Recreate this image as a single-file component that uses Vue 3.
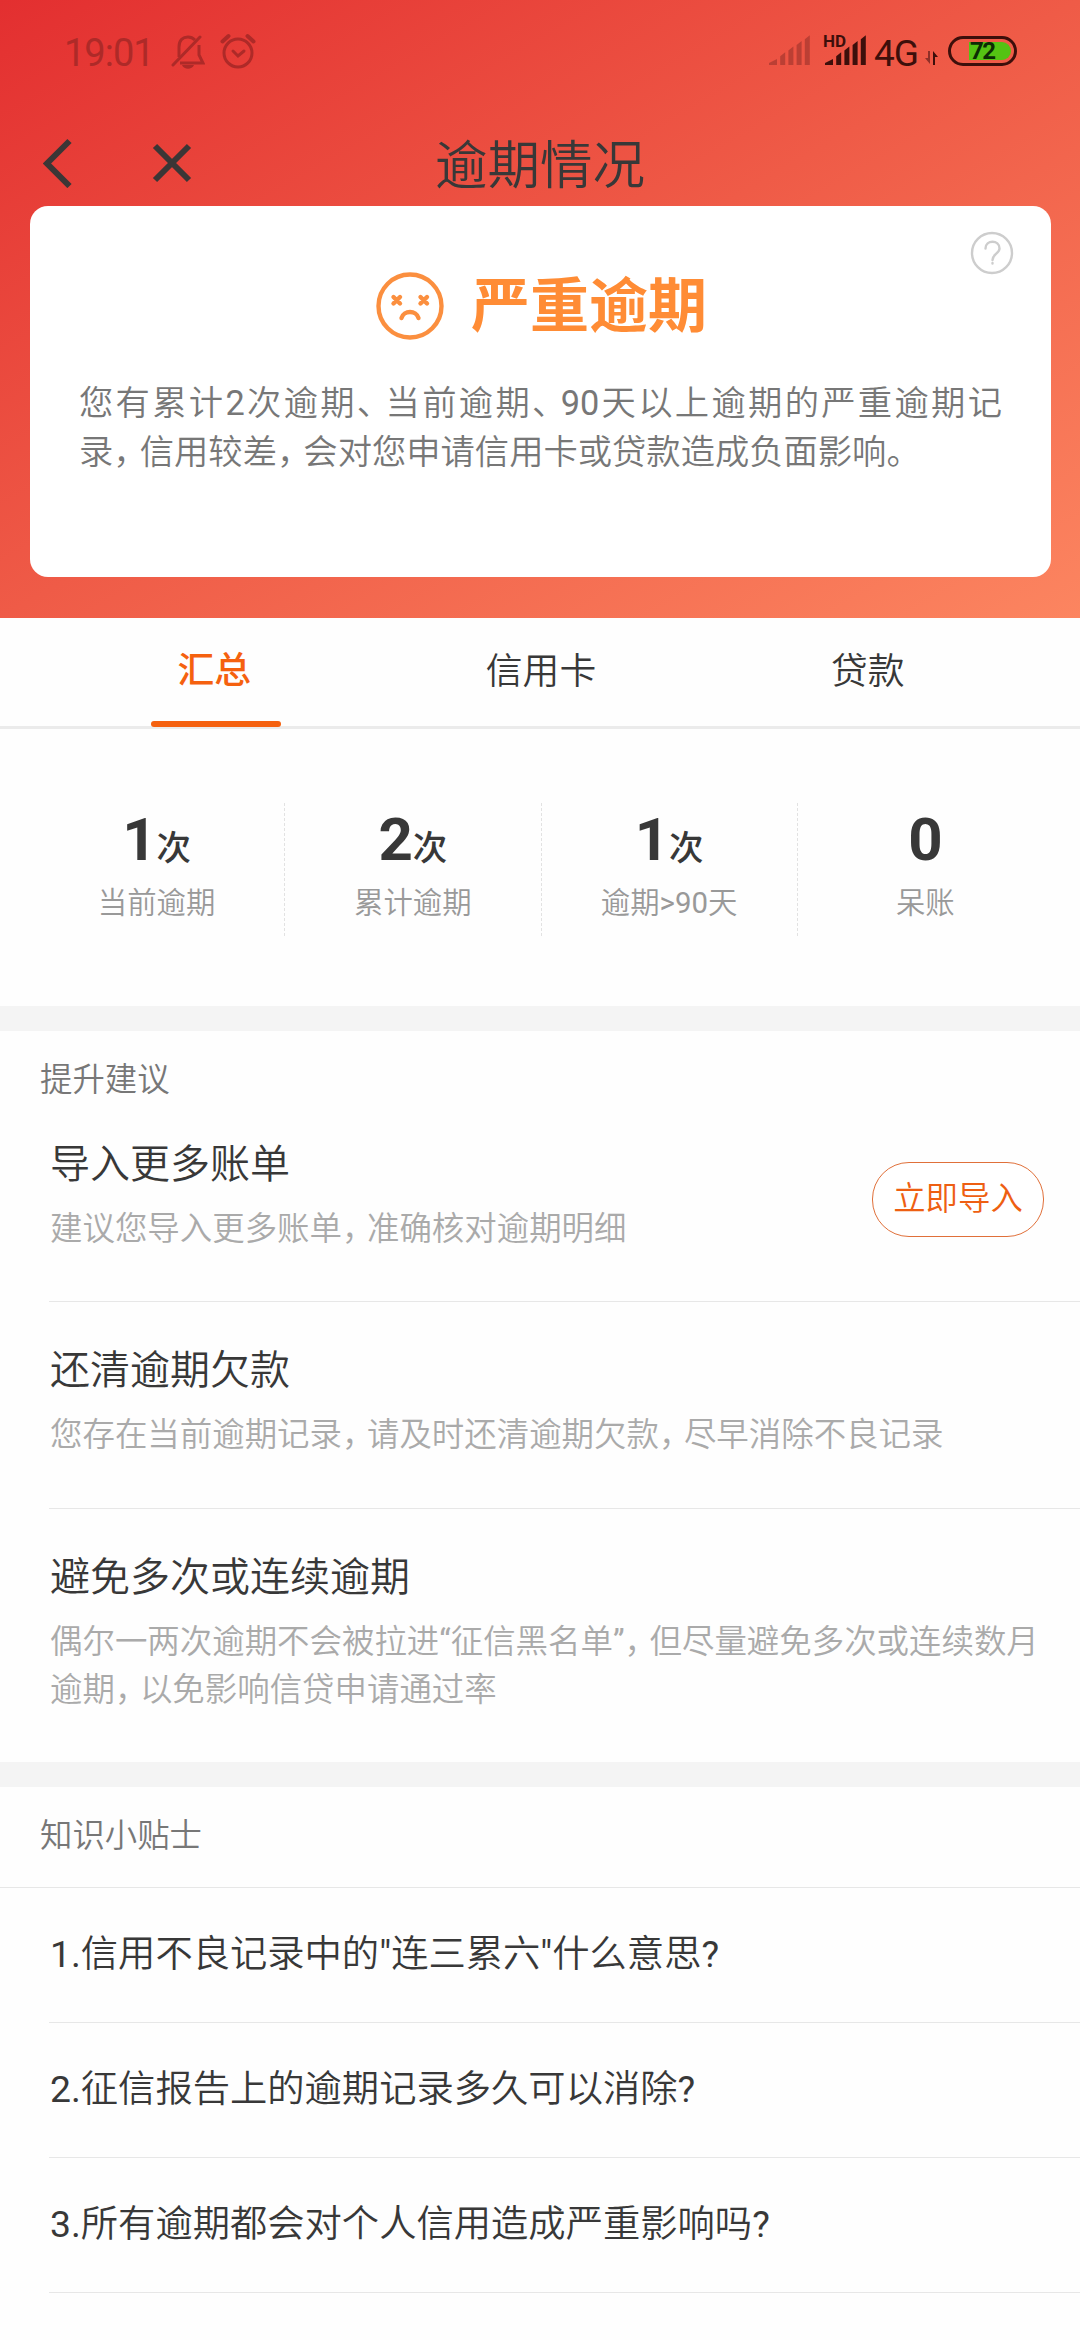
<script setup>
const tabs = ['汇总', '信用卡', '贷款']
const stats = [
  { value: '1', unit: '次', label: '当前逾期' },
  { value: '2', unit: '次', label: '累计逾期' },
  { value: '1', unit: '次', label: '逾期>90天' },
  { value: '0', unit: '', label: '呆账' },
]
const summary = ['您有累计2次逾期、当前逾期、90天以上逾期的严重逾期记', '录，信用较差，会对您申请信用卡或贷款造成负面影响。']
const advice = [
  { title: '导入更多账单', lines: ['建议您导入更多账单，准确核对逾期明细'], action: '立即导入' },
  { title: '还清逾期欠款', lines: ['您存在当前逾期记录，请及时还清逾期欠款，尽早消除不良记录'] },
  {
    title: '避免多次或连续逾期',
    lines: ['偶尔一两次逾期不会被拉进“征信黑名单”，但尽量避免多次或连续数月', '逾期，以免影响信贷申请通过率'],
  },
]
const tips = [
  '1.信用不良记录中的"连三累六"什么意思?',
  '2.征信报告上的逾期记录多久可以消除?',
  '3.所有逾期都会对个人信用造成严重影响吗?',
]
// Commas are set tighter than a full em and Latin runs one weight heavier,
// so a line is cut into pieces that can be styled apart.
const pieces = (text) => text.split(/([，、]|[0-9.?>"“”]+)/).filter(Boolean)
const kind = (s) => ({ mark: /^[，、]$/.test(s), latin: /^[0-9.?>"“”]+$/.test(s) })
const bars = [0, 1, 2, 3, 4]
</script>

<template>
  <div class="page">
    <header class="hero">
      <div class="status">
        <span class="clock">19:01</span>
        <svg class="bell" width="34" height="36" viewBox="0 0 34 36" fill="none" stroke="currentColor" stroke-width="3">
          <path d="M8 23V13C8 6 12 3 17 3c3 0 5 1 7 3M28 11v10l4 8H9" />
          <path d="M2 31L29 3" stroke-linecap="round" />
          <path d="M11 31h12c-2 5-10 5-12 0z" fill="currentColor" stroke="none" />
        </svg>
        <svg class="alarm" width="36" height="36" viewBox="0 0 36 36" fill="none" stroke="currentColor" stroke-width="3" stroke-linecap="round">
          <circle cx="18" cy="20" r="14" />
          <path d="M13 18l5 5 6-5" />
          <path d="M2.500 8.500l6-5.500M33.500 8.500l-6-5.500" stroke-width="4" />
        </svg>
        <div class="signals">
          <svg width="98" height="34" viewBox="0 0 98 34">
            <g fill="#bb3f34">
              <path v-for="i in bars" :key="i" :d="`M${(i ? 3 : 0) + i * 8.2} 32v-${i ? 3 + i * 5.7 : 2}l${i ? 5 : 8}-4v${i ? 7 + i * 5.7 : 6}z`" />
            </g>
            <g fill="#3d0f0b">
              <path v-for="i in bars" :key="i" :d="`M${(i ? 59 : 56) + i * 8.2} 32v-${i ? 3 + i * 5.7 : 2}l${i ? 5 : 8}-4v${i ? 7 + i * 5.7 : 6}z`" />
            </g>
          </svg>
          <span class="hd">HD</span>
        </div>
        <span class="net">4G</span>
        <svg class="updown" width="14" height="14" viewBox="0 0 14 14">
          <path d="M5 0v13L0 7h3V0z" fill="#8f3028" />
          <path d="M8 14V0l5 6h-3v8z" fill="#3d0f0b" />
        </svg>
        <div class="battery"><span class="charge"></span><b>72</b></div>
      </div>
      <div class="nav">
        <svg class="back" width="30" height="50" viewBox="0 0 30 50"><path d="M26.500 3L4 25.500 26.500 48" /></svg>
        <svg class="close" width="40" height="40" viewBox="0 0 40 40"><path d="M3 3l34 34M37 3L3 37" /></svg>
        <h1>逾期情况</h1>
      </div>
      <section class="card">
        <svg class="help" width="44" height="44" viewBox="0 0 44 44" fill="none" stroke="#cdcdcd" stroke-width="2.400">
          <circle cx="22" cy="22" r="20" />
          <path d="M15.500 17.500c0-9 14-9 14 0 0 5-7 5.500-7 11.500M22.500 32v.5" stroke-linecap="round" />
        </svg>
        <div class="verdict">
          <svg width="68" height="68" viewBox="0 0 68 68" fill="none" stroke="#fb8f3f" stroke-width="4.400" stroke-linecap="round">
            <circle cx="34" cy="34" r="31.500" />
            <path d="M17.500 25l6.500 6.500M24 25l-6.500 6.500M44.500 25l6.500 6.500M51 25l-6.500 6.500M25.500 46c2-8 15-8 17 0" />
          </svg>
          <strong>严重逾期</strong>
        </div>
        <p class="summary">
          <span v-for="line in summary" :key="line" class="line"><span v-for="(s, i) in pieces(line)" :key="i" :class="kind(s)">{{ s }}</span></span>
        </p>
      </section>
    </header>

    <nav class="tabs">
      <div v-for="(t, i) in tabs" :key="t" class="tab" :class="{ active: i === 0 }">{{ t }}</div>
    </nav>

    <section class="stats">
      <div v-for="s in stats" :key="s.label" class="stat">
        <div class="value">{{ s.value }}<small v-if="s.unit">{{ s.unit }}</small></div>
        <div class="label"><span v-for="(p, i) in pieces(s.label)" :key="i" :class="kind(p)">{{ p }}</span></div>
      </div>
    </section>

    <section class="block advice">
      <h2>提升建议</h2>
      <article v-for="a in advice" :key="a.title" class="item">
        <div class="body">
          <h3>{{ a.title }}</h3>
          <p>
            <span v-for="line in a.lines" :key="line" class="line"><span v-for="(s, i) in pieces(line)" :key="i" :class="kind(s)">{{ s }}</span></span>
          </p>
        </div>
        <button v-if="a.action">{{ a.action }}</button>
      </article>
    </section>

    <section class="block tips">
      <h2>知识小贴士</h2>
      <div class="list">
        <div v-for="t in tips" :key="t" class="tip"><span v-for="(s, i) in pieces(t)" :key="i" :class="kind(s)">{{ s }}</span></div>
      </div>
    </section>
  </div>
</template>

<style>
body {
  margin: 0;
  background: #fff;
}
</style>

<style scoped>
.page {
  width: 1080px;
  height: 2340px;
  overflow: hidden;
  background: #fefefe;
  color: #383838;
  font-family: Roboto, 'Noto Sans CJK SC', sans-serif;
  font-weight: 350;
}
h1, h2, h3, p {
  margin: 0;
  font-weight: inherit;
}
.latin {
  font-weight: 400;
}
.mark {
  letter-spacing: -0.23em;
}
.hero {
  height: 618px;
  background: linear-gradient(to bottom right, #e32f30, #ef5b47 50%, #fc8560);
}
.status {
  display: flex;
  height: 106px;
  box-sizing: border-box;
  padding: 33px 0 0 64px;
  color: #ae2a28;
}
.clock {
  width: 107px;
  font-size: 38px;
  line-height: 40px;
  font-weight: 400;
  letter-spacing: -1px;
}
.bell {
  margin-top: 1px;
}
.alarm {
  margin-left: 15px;
}
.signals {
  position: relative;
  width: 98px;
  height: 34px;
  margin-left: 513px;
}
.hd {
  position: absolute;
  left: 54px;
  top: -1px;
  color: #3d0f0b;
  font-size: 17px;
  line-height: 18px;
  font-weight: 700;
}
.net {
  margin-left: 7px;
  width: 51px;
  color: #3d0f0b;
  font-size: 37px;
  line-height: 41px;
  font-weight: 400;
  letter-spacing: -1px;
}
.updown {
  margin-top: 18px;
}
.battery {
  position: relative;
  margin: 3px 0 0 9px;
  width: 69px;
  height: 30px;
  box-sizing: border-box;
  border: 3px solid #3d0f0b;
  border-radius: 15px;
}
.charge {
  position: absolute;
  top: 3px;
  right: 3px;
  width: 42px;
  height: 18px;
  border-radius: 0 9px 9px 0;
  background: #55c313;
}
.battery b {
  position: relative;
  display: block;
  padding-left: 19px;
  color: #0c2c04;
  font-size: 24px;
  line-height: 25px;
  letter-spacing: -1.500px;
}
.nav {
  position: relative;
  display: flex;
  height: 100px;
}
.nav svg {
  fill: none;
  stroke: #3b3636;
  stroke-width: 6;
}
.back {
  margin: 32px 0 0 43px;
}
.close {
  margin: 37px 0 0 79px;
}
.nav h1 {
  position: absolute;
  inset: 0;
  text-align: center;
  font-size: 52.500px;
  line-height: 121px;
}
.card {
  position: relative;
  width: 1021px;
  height: 371px;
  margin-left: 30px;
  box-sizing: border-box;
  padding: 66px 49px 0 49px;
  border-radius: 18px;
  background: #fff;
}
.help {
  position: absolute;
  top: 25px;
  right: 37px;
}
.verdict {
  display: flex;
  justify-content: center;
  gap: 27px;
  height: 68px;
  padding-left: 2px;
}
.verdict strong {
  color: #ff8c35;
  font-size: 59px;
  line-height: 70px;
  font-weight: 700;
}
.summary {
  margin-top: 39px;
  color: #777;
  font-size: 34.300px;
  line-height: 49px;
}
.line {
  display: block;
  white-space: nowrap;
}
.summary .line:first-child {
  text-align: justify;
  text-align-last: justify;
  white-space: normal;
}
.tabs {
  display: flex;
  height: 108px;
  padding: 0 49px 0 51px;
  border-bottom: 3px solid #ebebeb;
}
.tab {
  position: relative;
  flex: 1;
  text-align: center;
  font-size: 36.800px;
  line-height: 107px;
}
.tab.active {
  color: #f5610f;
  font-weight: 500;
  line-height: 106px;
}
.tab.active::after {
  content: '';
  position: absolute;
  left: 100px;
  bottom: -1px;
  width: 130px;
  height: 6px;
  border-radius: 3px;
  background: #f5610f;
}
.stats {
  display: flex;
  height: 277px;
  box-sizing: border-box;
  padding: 74px 26px 0 29px;
}
.stat {
  flex: 1;
  height: 133px;
  box-sizing: border-box;
  border-right: 1px dashed #e2e2e2;
  text-align: center;
}
.stat:last-child {
  border-right-color: transparent;
}
.value {
  height: 71px;
  font-size: 60px;
  line-height: 74px;
  font-weight: 700;
}
.value small {
  font-size: 34.500px;
  font-weight: 500;
}
.label {
  color: #999;
  font-size: 29.400px;
  line-height: 59px;
}
.block {
  border-top: 25px solid #f4f4f4;
}
.block h2 {
  padding-left: 40px;
  color: #777;
  font-size: 32.400px;
}
.advice h2 {
  height: 66px;
  line-height: 98px;
}
.item {
  display: flex;
  height: 206px;
  margin-left: 49px;
  border-bottom: 1px solid #e7e7e7;
}
.advice .item:first-of-type {
  height: 204px;
}
.item:last-child {
  height: 253px;
  border-bottom: 0;
}
.body {
  flex: 1;
  padding: 43px 0 0 1px;
}
.body h3 {
  font-size: 40px;
  line-height: 52px;
}
.item:first-of-type .body {
  padding-top: 42px;
}
.body p {
  margin-top: 14px;
  color: #aaa;
  font-size: 32.450px;
  line-height: 48px;
}
button {
  width: 172px;
  height: 75px;
  margin: 65px 36px 0 0;
  padding: 0 0 9px;
  border: 1px solid #e0703a;
  border-radius: 37px;
  background: #fff;
  color: #ee5f12;
  font: inherit;
  font-size: 32.400px;
}
.tips h2 {
  height: 100px;
  line-height: 99px;
}
.list {
  border-top: 1px solid #e7e7e7;
}
.tip {
  height: 134px;
  margin-left: 49px;
  padding-left: 1px;
  border-bottom: 1px solid #e7e7e7;
  font-size: 37.300px;
  line-height: 133px;
}
</style>
